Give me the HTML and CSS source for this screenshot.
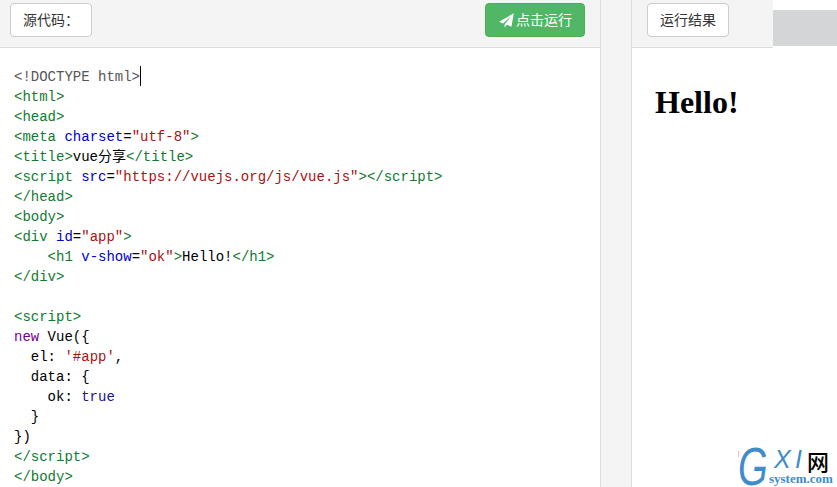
FILE: index.html
```html
<!DOCTYPE html>
<html lang="zh">
<head>
<meta charset="utf-8">
<title>vue分享</title>
<link rel="stylesheet" href="styles.css">
</head>
<body>
<main class="layout">
  <section class="source">
    <header class="bar bar-source">
      <span class="btn">源代码：</span>
      <span class="btn btn-run"><svg class="send" viewBox="0 0 14 14" aria-hidden="true"><path d="M13.8.2 11.6 12.8 7.3 11 5.2 13.6V10.7L11.6 2.7 3.8 9.7.2 8.1Z"/></svg>点击运行</span>
    </header>
<pre class="code"><span class="dt">&lt;!DOCTYPE html&gt;</span><i class="cursor"></i>
<span class="t">&lt;html&gt;</span>
<span class="t">&lt;head&gt;</span>
<span class="t">&lt;meta</span> <span class="a">charset</span>=<span class="s">"utf-8"</span><span class="t">&gt;</span>
<span class="t">&lt;title&gt;</span>vue分享<span class="t">&lt;/title&gt;</span>
<span class="t">&lt;script</span> <span class="a">src</span>=<span class="s">"https://vuejs.org/js/vue.js"</span><span class="t">&gt;&lt;/script&gt;</span>
<span class="t">&lt;/head&gt;</span>
<span class="t">&lt;body&gt;</span>
<span class="t">&lt;div</span> <span class="a">id</span>=<span class="s">"app"</span><span class="t">&gt;</span>
    <span class="t">&lt;h1</span> <span class="a">v-show</span>=<span class="s">"ok"</span><span class="t">&gt;</span>Hello!<span class="t">&lt;/h1&gt;</span>
<span class="t">&lt;/div&gt;</span>

<span class="t">&lt;script&gt;</span>
<span class="k">new</span> Vue({
  el: <span class="s">'#app'</span>,
  data: {
    ok: <span class="b">true</span>
  }
})
<span class="t">&lt;/script&gt;</span>
<span class="t">&lt;/body&gt;</span></pre>
  </section>
  <div class="gutter"></div>
  <section class="result">
    <div class="result-top">
      <header class="bar bar-result"><span class="btn">运行结果</span></header>
      <div class="scroll-stub"></div>
    </div>
    <h1 class="hello">Hello!</h1>
  </section>
</main>
<div class="logo">
  <span class="logo-g">G</span><span class="logo-x">X</span><span class="logo-i">I</span><span class="logo-net">网</span>
  <span class="logo-domain">system.com</span>
</div>
</body>
</html>
```
FILE: styles.css
```css
* { box-sizing: border-box; }
html, body { margin: 0; height: 100%; overflow: hidden; background: #fff; }
.layout {
  display: grid;
  grid-template-columns: 601px 31px 1fr;
  height: 487px;
}
.source { border-right: 1px solid #ddd; min-width: 0; overflow: hidden; }
.gutter { background: #f4f4f4; border-right: 1px solid #ddd; }
.bar {
  display: flex;
  align-items: flex-start;
  justify-content: space-between;
  height: 48px;
  padding: 3px 15px 0 10px;
  background: #f4f4f4;
  border-bottom: 1px solid #ddd;
}
.btn {
  display: flex;
  align-items: center;
  justify-content: center;
  height: 34px;
  padding: 0 12px;
  font: 14px/20px "Liberation Sans", "Noto Sans CJK SC", sans-serif;
  color: #333;
  background: #fff;
  border: 1px solid #ccc;
  border-radius: 4px;
  white-space: nowrap;
}
.btn-run {
  width: 100px;
  padding: 0 12px 0 13px;
  color: #fff;
  background: #4fb766;
  border-color: #4cae4c;
  gap: 2px;
}
.send { width: 15px; height: 15px; fill: #fff; flex: none; }
.code {
  margin: 0;
  padding: 18px 0 0 14px;
  font: 14px/20px "Liberation Mono", "Noto Sans CJK SC", monospace;
  color: #000;
}
.cursor {
  display: inline-block;
  width: 1px;
  height: 20px;
  margin-bottom: -5px;
  background: #000;
}
.dt { color: #555; }
.t { color: #107a30; }
.a { color: #00c; }
.s { color: #a11; }
.k { color: #708; }
.b { color: #219; }
.result { min-width: 0; overflow: hidden; }
.result-top { display: flex; align-items: flex-start; }
.bar-result { width: 141px; padding-left: 15px; flex: none; }
.scroll-stub { flex: 1; height: 36px; margin-top: 10px; background: #d4d5d7; }
.hello {
  margin: 36px 0 0 23px;
  font: bold 32px/36px "Liberation Serif", serif;
  color: #000;
}
.logo {
  position: absolute;
  left: 737px;
  top: 442px;
  width: 100px;
  height: 45px;
  background: #fff;
  color: #3f8ccb;
}
.logo::before {
  content: "";
  position: absolute;
  left: 1px;
  top: 9px;
  width: 1px;
  height: 6px;
  background: #f3b8b8;
}
.logo-g {
  position: absolute;
  left: 1px;
  top: 4px;
  font: italic 53px/41px "Liberation Sans", sans-serif;
  transform: scaleX(.72);
  transform-origin: 0 0;
}
.logo-x, .logo-i {
  position: absolute;
  top: 5px;
  font: italic 25px/24px "Liberation Sans", sans-serif;
}
.logo-x { left: 37px; }
.logo-i { left: 58px; }
.logo-net {
  position: absolute;
  left: 70px;
  top: 6px;
  font: 500 22px/24px "Noto Sans CJK SC", sans-serif;
  color: #000;
}
.logo-domain {
  position: absolute;
  left: 32px;
  top: 31px;
  font: bold 13px/12px "Liberation Serif", serif;
  white-space: nowrap;
}
```
